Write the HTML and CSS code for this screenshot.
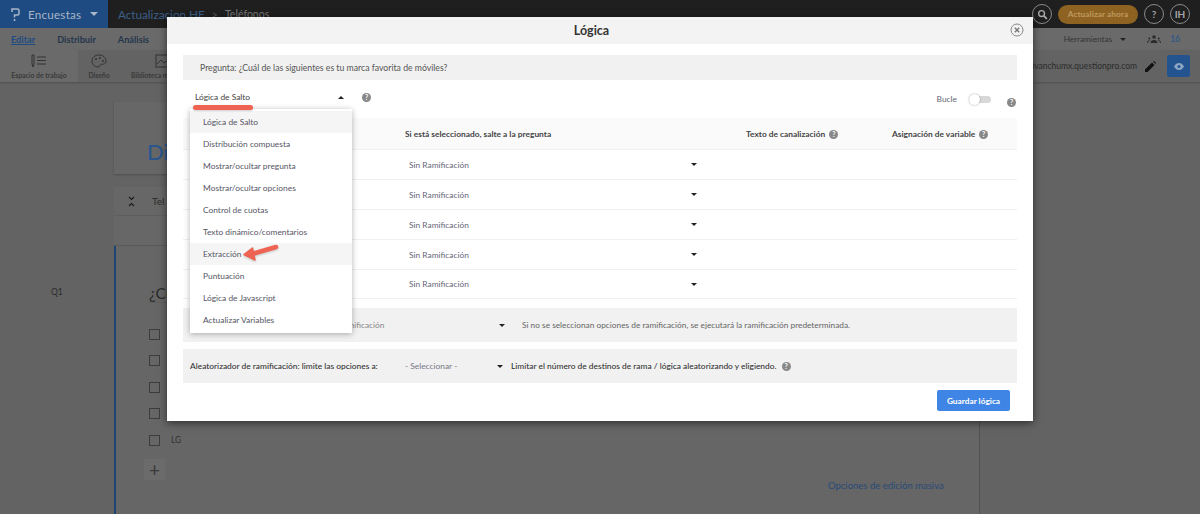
FILE: index.html
```html
<!DOCTYPE html>
<html lang="es">
<head>
  <meta charset="UTF-8">
  <title>Lógica</title>
  <link rel="stylesheet" href="styles.css">
</head>
<body>
<header class="topbar">
  <div class="brand">
    <svg class="brand-logo" width="9" height="13" viewBox="0 0 9 13"><path d="M1 4V1h5.500Q8 1 8 2.500v3Q8 7 6.500 7H3.500v2.500" fill="none" stroke="#a8b6c8" stroke-width="1.500"/><rect x="2.700" y="11" width="1.600" height="2" fill="#a8b6c8"/></svg>
    <span class="brand-name">Encuestas</span>
    <span class="caret caret-light"></span>
  </div>
  <div class="crumbs">
    <span class="crumb-main">Actualizacion HF</span>
    <span class="crumb-sep">&gt;</span>
    <span class="crumb-sub">Teléfonos</span>
  </div>
  <div class="top-actions">
    <span class="round-btn">
      <svg width="11" height="11" viewBox="0 0 12 12"><circle cx="5" cy="5" r="3.200" fill="none" stroke="#aaa" stroke-width="1.500"/><path d="M7.500 7.500l3.200 3.200" stroke="#aaa" stroke-width="2"/></svg>
    </span>
    <span class="upgrade">Actualizar ahora</span>
    <span class="round-btn">?</span>
    <span class="round-btn">IH</span>
  </div>
</header>

<nav class="tabs">
  <a class="tab tab-active">Editar</a>
  <a class="tab">Distribuir</a>
  <a class="tab">Análisis</a>
  <div class="tabs-right">
    <span class="tools">Herramientas</span>
    <span class="caret"></span>
    <svg class="people" width="14" height="9" viewBox="0 0 14 9"><circle cx="7" cy="2" r="1.800" fill="#2b2b2b"/><path d="M3.500 8c0-2 1.500-3 3.500-3s3.500 1 3.500 3z" fill="#2b2b2b"/><circle cx="2.300" cy="3.500" r="1" fill="#2b2b2b"/><circle cx="11.700" cy="3.500" r="1" fill="#2b2b2b"/><path d="M.5 8c0-1.500.7-2.500 2-2.500M13.500 8c0-1.500-.7-2.500-2-2.500" stroke="#2b2b2b" fill="none"/></svg>
    <span class="count">16</span>
  </div>
</nav>

<div class="toolbar">
  <div class="tool tool-active">
    <svg width="16" height="14" viewBox="0 0 16 14"><path d="M1 1v9l1 3 1-3V1z" fill="none" stroke="#333"/><path d="M6 3h9M6 6.500h9M6 10h9" stroke="#333"/></svg>
    <span>Espacio de trabajo</span>
  </div>
  <div class="tool">
    <svg width="16" height="14" viewBox="0 0 16 14"><path d="M8 1C4 1 1 3.500 1 7s3 6 6 6c2 0 1.500-2 2.500-2.500S15 11 15 7c0-3.500-3-6-7-6z" fill="none" stroke="#333"/><circle cx="5" cy="5" r="1" fill="#333"/><circle cx="9" cy="4" r="1" fill="#333"/><circle cx="12" cy="7" r="1" fill="#333"/></svg>
    <span>Diseño</span>
  </div>
  <div class="tool tool-last">
    <svg width="16" height="14" viewBox="0 0 16 14"><rect x="2" y="1" width="12" height="12" fill="none" stroke="#333"/><path d="M3 10l4-4 3 3 3-2" fill="none" stroke="#333"/></svg>
    <span>Biblioteca m</span>
  </div>
  <div class="toolbar-right">
    <span class="survey-url">ivanchumx.questionpro.com</span>
    <svg class="pencil" width="11" height="11" viewBox="0 0 11 11"><path d="M0 11V8.500L7 1.500 9.500 4 2.500 11zM8 .5l1-.5 2 2-.5 1z" fill="#111"/></svg>
    <span class="preview-btn">
      <svg width="10" height="7" viewBox="0 0 10 7"><path d="M0 3.500C1.500 1 3 0 5 0s3.500 1 5 3.500C8.500 6 7 7 5 7S1.500 6 0 3.500z" fill="#8fa6c4"/><circle cx="5" cy="3.500" r="1.500" fill="#24548f"/></svg>
    </span>
  </div>
</div>

<main class="canvas">
  <section class="title-card"><h1>Di</h1></section>
  <section class="block-head">
    <div class="block-title">
      <svg width="7" height="11" viewBox="0 0 7 11"><path d="M1 1l2.500 2.500L6 1M1 10l2.500-2.500L6 10" fill="none" stroke="#1a1a1a" stroke-width="1.100"/></svg>
      <span>Tel</span>
    </div>
  </section>
  <div class="q-number">Q1</div>
  <section class="question">
    <h2>¿Cu</h2>
    <ul class="answers">
      <li><span class="check"></span></li>
      <li><span class="check"></span></li>
      <li><span class="check"></span></li>
      <li><span class="check"></span></li>
      <li><span class="check"></span>LG</li>
    </ul>
    <div class="add-row">+</div>
    <a class="bulk-link">Opciones de edición masiva</a>
  </section>
</main>

<div class="modal">
  <div class="modal-head">
    <span class="modal-title">Lógica</span>
    <svg class="modal-close" width="14" height="14" viewBox="0 0 14 14"><circle cx="7" cy="7" r="6" fill="none" stroke="#888"/><path d="M4.800 4.800l4.400 4.400M9.200 4.800l-4.400 4.400" stroke="#777" stroke-width="1.400"/></svg>
  </div>
  <div class="modal-body">
    <div class="strip question-strip">Pregunta: ¿Cuál de las siguientes es tu marca favorita de móviles?</div>

    <div class="logic-row">
      <span class="logic-select">Lógica de Salto</span>
      <span class="caret caret-up"></span>
      <span class="help help-logic">?</span>
      <span class="loop-label">Bucle</span>
      <span class="toggle"><span class="knob"></span></span>
      <span class="help help-loop">?</span>
    </div>

    <div class="logic-table">
      <div class="t-row t-head">
        <span class="t-jump">Si está seleccionado, salte a la pregunta</span>
        <span class="t-pipe">Texto de canalización <span class="help">?</span></span>
        <span class="t-var">Asignación de variable <span class="help">?</span></span>
      </div>
      <div class="t-row"><span class="t-val">Sin Ramificación</span><span class="caret"></span></div>
      <div class="t-row"><span class="t-val">Sin Ramificación</span><span class="caret"></span></div>
      <div class="t-row"><span class="t-val">Sin Ramificación</span><span class="caret"></span></div>
      <div class="t-row"><span class="t-val">Sin Ramificación</span><span class="caret"></span></div>
      <div class="t-row"><span class="t-val">Sin Ramificación</span><span class="caret"></span></div>
    </div>

    <div class="strip default-strip">
      <span class="default-value">Sin Ramificación</span>
      <span class="caret"></span>
      <span class="default-note">Si no se seleccionan opciones de ramificación, se ejecutará la ramificación predeterminada.</span>
    </div>

    <div class="strip random-strip">
      <span class="random-label">Aleatorizador de ramificación: limite las opciones a:</span>
      <span class="random-value">- Seleccionar -</span>
      <span class="caret"></span>
      <span class="random-note">Limitar el número de destinos de rama / lógica aleatorizando y eligiendo.</span>
      <span class="help">?</span>
    </div>

    <div class="modal-foot"><button class="save-btn">Guardar lógica</button></div>
  </div>

  <ul class="logic-menu">
    <li class="menu-item menu-hover">Lógica de Salto</li>
    <li class="menu-item">Distribución compuesta</li>
    <li class="menu-item">Mostrar/ocultar pregunta</li>
    <li class="menu-item">Mostrar/ocultar opciones</li>
    <li class="menu-item">Control de cuotas</li>
    <li class="menu-item">Texto dinámico/comentarios</li>
    <li class="menu-item menu-hover">Extracción</li>
    <li class="menu-item">Puntuación</li>
    <li class="menu-item">Lógica de Javascript</li>
    <li class="menu-item">Actualizar Variables</li>
  </ul>

  <span class="mark-line"></span>
  <svg class="mark-arrow" width="38" height="22" viewBox="0 0 38 22"><path d="M33 4L9 11" stroke="#ee6352" stroke-width="4.500" stroke-linecap="round"/><path d="M1 11.500L9.500 5l2.500 12z" fill="#ee6352" stroke="#ee6352" stroke-width="1.500" stroke-linejoin="round"/></svg>
</div>
</body>
</html>
```

FILE: styles.css
```css
* {
  box-sizing: border-box;
}

html, body {
  margin: 0;
  height: 100%;
  overflow: hidden;
}

body {
  font-family: Lato, Arial, sans-serif;
  font-size: 8.4px;
  color: #2b2b2b;
  background: #636363;
  position: relative;
}

ul {
  margin: 0;
  padding: 0;
  list-style: none;
}

/* top bar */
.topbar {
  height: 28px;
  background: #1f1f1f;
  display: flex;
  align-items: center;
}

.brand {
  width: 108px;
  height: 28px;
  background: #1e4b82;
  display: flex;
  align-items: center;
  padding-left: 11px;
}

.brand-name {
  font-size: 11.700px;
  margin-left: 8px;
  color: #a8b6c8;
  letter-spacing: .2px;
}

.caret {
  width: 0;
  height: 0;
  flex: none;
  border-left: 3px solid transparent;
  border-right: 3px solid transparent;
  border-top: 3px solid #222;
  display: inline-block;
}

.caret-light {
  border-left-width: 4px;
  border-right-width: 4px;
  border-top: 4px solid #a8b6c8;
  margin-left: 9px;
}

.caret-up {
  border-top: 0;
  border-bottom: 3px solid #222;
}

.crumbs {
  margin-left: 10px;
  display: flex;
  align-items: center;
}

.crumb-main {
  font-size: 11.700px;
  color: #3d5f8a;
}

.crumb-sep {
  margin: 0 7px;
  font-size: 11px;
  color: #555;
}

.crumb-sub {
  font-size: 10.500px;
  color: #777;
}

.top-actions {
  margin-left: auto;
  padding-right: 10px;
  display: flex;
  align-items: center;
  gap: 6px;
}

.round-btn {
  width: 20px;
  height: 20px;
  border: 1px solid #8a8a8a;
  border-radius: 50%;
  color: #a5a5a5;
  font-size: 10px;
  font-weight: 700;
  display: flex;
  align-items: center;
  justify-content: center;
}

.upgrade {
  width: 80px;
  height: 19px;
  border-radius: 10px;
  background: #8e6322;
  color: #c09a60;
  font-size: 8.200px;
  font-weight: 700;
  letter-spacing: .1px;
  display: flex;
  align-items: center;
  justify-content: center;
}

/* tabs */
.tabs {
  height: 22px;
  background: #6a6a6a;
  display: flex;
  align-items: center;
  padding-left: 11px;
  font-size: 9.200px;
  font-weight: 700;
}

.tab {
  margin-right: 22px;
  color: #25364c;
}

.tab-active {
  color: #1e4b82;
  text-decoration: underline;
}

.tabs-right {
  margin-left: auto;
  padding-right: 20px;
  display: flex;
  align-items: center;
  font-size: 8.200px;
  font-weight: 400;
}

.tools {
  color: #333;
  margin-right: 8px;
}

.people {
  margin-left: 21px;
}

.count {
  margin-left: 9px;
  font-size: 8.500px;
  color: #24548f;
}

/* toolbar */
.toolbar {
  height: 32px;
  background: #636363;
  display: flex;
  box-shadow: 0 1px 2px rgba(0, 0, 0, .2);
  font-size: 6.800px;
  color: #3a3a3a;
}

.tool {
  width: 42px;
  flex: none;
  display: flex;
  flex-direction: column;
  align-items: center;
  justify-content: center;
  gap: 3px;
  white-space: nowrap;
  font-weight: 700;
}

.tool-active {
  width: 78px;
  background: #6a6a6a;
}

.tool-last {
  width: 60px;
  margin-left: 11px;
  align-items: flex-start;
}

.tool-last svg {
  margin-left: 23px;
}

.toolbar-right {
  margin-left: auto;
  display: flex;
  align-items: center;
  padding-right: 10px;
  font-size: 8.500px;
  color: #2b2b2b;
}

.pencil {
  margin-left: 8px;
}

.preview-btn {
  width: 23px;
  height: 22px;
  margin-left: 11px;
  background: #24548f;
  border-radius: 2px;
  display: flex;
  align-items: center;
  justify-content: center;
}

/* survey behind the dialog */
.canvas {
  display: grid;
  grid-template-columns: 114px 866px;
  padding-top: 20px;
}

.title-card {
  grid-column: 2;
  height: 72px;
  background: #676767;
  box-shadow: 0 1px 2px rgba(0, 0, 0, .2);
  padding: 36px 0 0 33px;
}

.title-card h1 {
  margin: 0;
  font-size: 22px;
  font-weight: 400;
  color: #26558f;
}

.block-head {
  grid-column: 2;
  height: 59px;
  margin-top: 13px;
  background: #676767;
  border-bottom: 1px solid #5a5a5a;
}

.block-title {
  height: 29px;
  padding-left: 14px;
  display: flex;
  align-items: center;
  gap: 17px;
  font-size: 10px;
  border-bottom: 1px solid #5e5e5e;
}

.q-number {
  grid-column: 1;
  padding: 41px 0 0 51px;
  font-size: 8.500px;
  color: #2b2b2b;
}

.question {
  grid-column: 2;
  height: 268px;
  background: #666;
  border-left: 2px solid #1e4476;
  border-right: 1px solid #525252;
  padding: 38px 0 0 33px;
  position: relative;
}

.question h2 {
  margin: 0 0 18px;
  font-size: 15.500px;
  font-weight: 400;
  white-space: nowrap;
  line-height: 18px;
  border-bottom: 1px solid #5f5f5f;
}

.answers li {
  height: 26.500px;
  display: flex;
  align-items: center;
  gap: 11px;
  color: #333;
  font-size: 8.500px;
}

.check {
  width: 11px;
  height: 11px;
  border: 1px solid #3c3c3c;
}

.add-row {
  width: 21px;
  height: 21px;
  margin: 5px 0 0 -5px;
  background: #6b6b6b;
  color: #3a3a3a;
  font-size: 19px;
  display: flex;
  align-items: center;
  justify-content: center;
}

.bulk-link {
  position: absolute;
  left: 712px;
  top: 234px;
  font-size: 9.500px;
  color: #284a78;
}

/* dialog */
.modal {
  position: absolute;
  left: 167px;
  top: 17px;
  width: 866px;
  height: 404px;
  background: #fff;
  box-shadow: 0 2px 8px rgba(0, 0, 0, .55);
}

.modal-head {
  height: 27px;
  padding-right: 17px;
  background: #f3f3f3;
  display: flex;
  align-items: center;
  justify-content: center;
  position: relative;
}

.modal-title {
  font-size: 12.500px;
  font-weight: 700;
  color: #333;
}

.modal-close {
  position: absolute;
  right: 9px;
  top: 6px;
}

.modal-body {
  padding: 11px 16px 0;
}

.strip {
  background: #f1f1f1;
  display: flex;
  align-items: center;
}

.question-strip {
  height: 25px;
  padding-left: 17px;
  font-size: 8.700px;
  color: #555;
}

.logic-row {
  height: 38px;
  display: flex;
  align-items: center;
  padding: 0 0 4px 12px;
  color: #444;
}

.logic-select {
  width: 143px;
}

.help {
  width: 9px;
  height: 9px;
  margin-left: 2px;
  border-radius: 50%;
  background: #888;
  color: #fff;
  font-size: 7px;
  font-weight: 700;
  line-height: 9px;
  display: inline-block;
  text-align: center;
}

.help-logic {
  margin-left: 18px;
}

.loop-label {
  margin: 3px 0 0 auto;
  color: #667;
}

.toggle {
  width: 22px;
  height: 7px;
  margin: 5px 0 0 12px;
  background: #d8d8d8;
  border-radius: 4px;
  position: relative;
}

.knob {
  position: absolute;
  left: 0;
  top: -2px;
  width: 11px;
  height: 11px;
  border-radius: 50%;
  background: #fff;
  box-shadow: 0 0 2px rgba(0, 0, 0, .4);
}

.help-loop {
  margin: 10px 1px 0 16px;
}

.logic-table {
  margin-bottom: 9px;
}

.t-row {
  height: 30px;
  display: flex;
  align-items: center;
  border-bottom: 1px solid #f0f0f0;
  padding-left: 222px;
}

.t-row:last-child {
  height: 29px;
}

.t-head {
  height: 32px;
  background: #fafafa;
  font-weight: 700;
  font-size: 8.400px;
  color: #444;
}

.t-jump {
  width: 341px;
}

.t-val {
  width: 286px;
  padding-left: 4px;
  color: #667;
}

.t-pipe {
  width: 146px;
}

.default-strip {
  height: 34px;
  margin-bottom: 7px;
  color: #666;
  padding-left: 142px;
  font-size: 8.300px;
}

.default-value {
  width: 174px;
  color: #888;
}

.default-note {
  margin-left: 17px;
}

.random-strip {
  height: 34px;
  padding-left: 7px;
  color: #333;
  font-weight: 500;
  white-space: nowrap;
}

.random-label {
  width: 215px;
}

.random-value {
  width: 92px;
  color: #778;
  font-weight: 400;
}

.random-note {
  margin: 0 3px 0 8px;
}

.modal-foot {
  display: flex;
  justify-content: flex-end;
  padding: 7px 7px 0 0;
}

.save-btn {
  width: 73px;
  height: 21px;
  padding: 0;
  background: #3f85e5;
  color: #fff;
  font-family: inherit;
  font-size: 8.300px;
  font-weight: 700;
  border: 0;
  border-radius: 2px;
}

/* open dropdown */
.logic-menu {
  position: absolute;
  left: 23px;
  top: 92px;
  width: 162px;
  padding: 2px 0;
  background: #fff;
  box-shadow: 0 1px 6px rgba(0, 0, 0, .3);
}

.menu-item {
  height: 22px;
  line-height: 22px;
  padding-left: 13px;
  color: #556;
}

.menu-hover {
  background: #f5f5f5;
}

.mark-line {
  position: absolute;
  left: 26px;
  top: 88px;
  width: 60px;
  height: 5px;
  background: #ee6352;
  border-radius: 3px;
  box-shadow: 0 1px 2px rgba(0, 0, 0, .2);
}

.mark-arrow {
  position: absolute;
  left: 76px;
  top: 226px;
  filter: drop-shadow(0 1px 1px rgba(0, 0, 0, .2));
}
```
